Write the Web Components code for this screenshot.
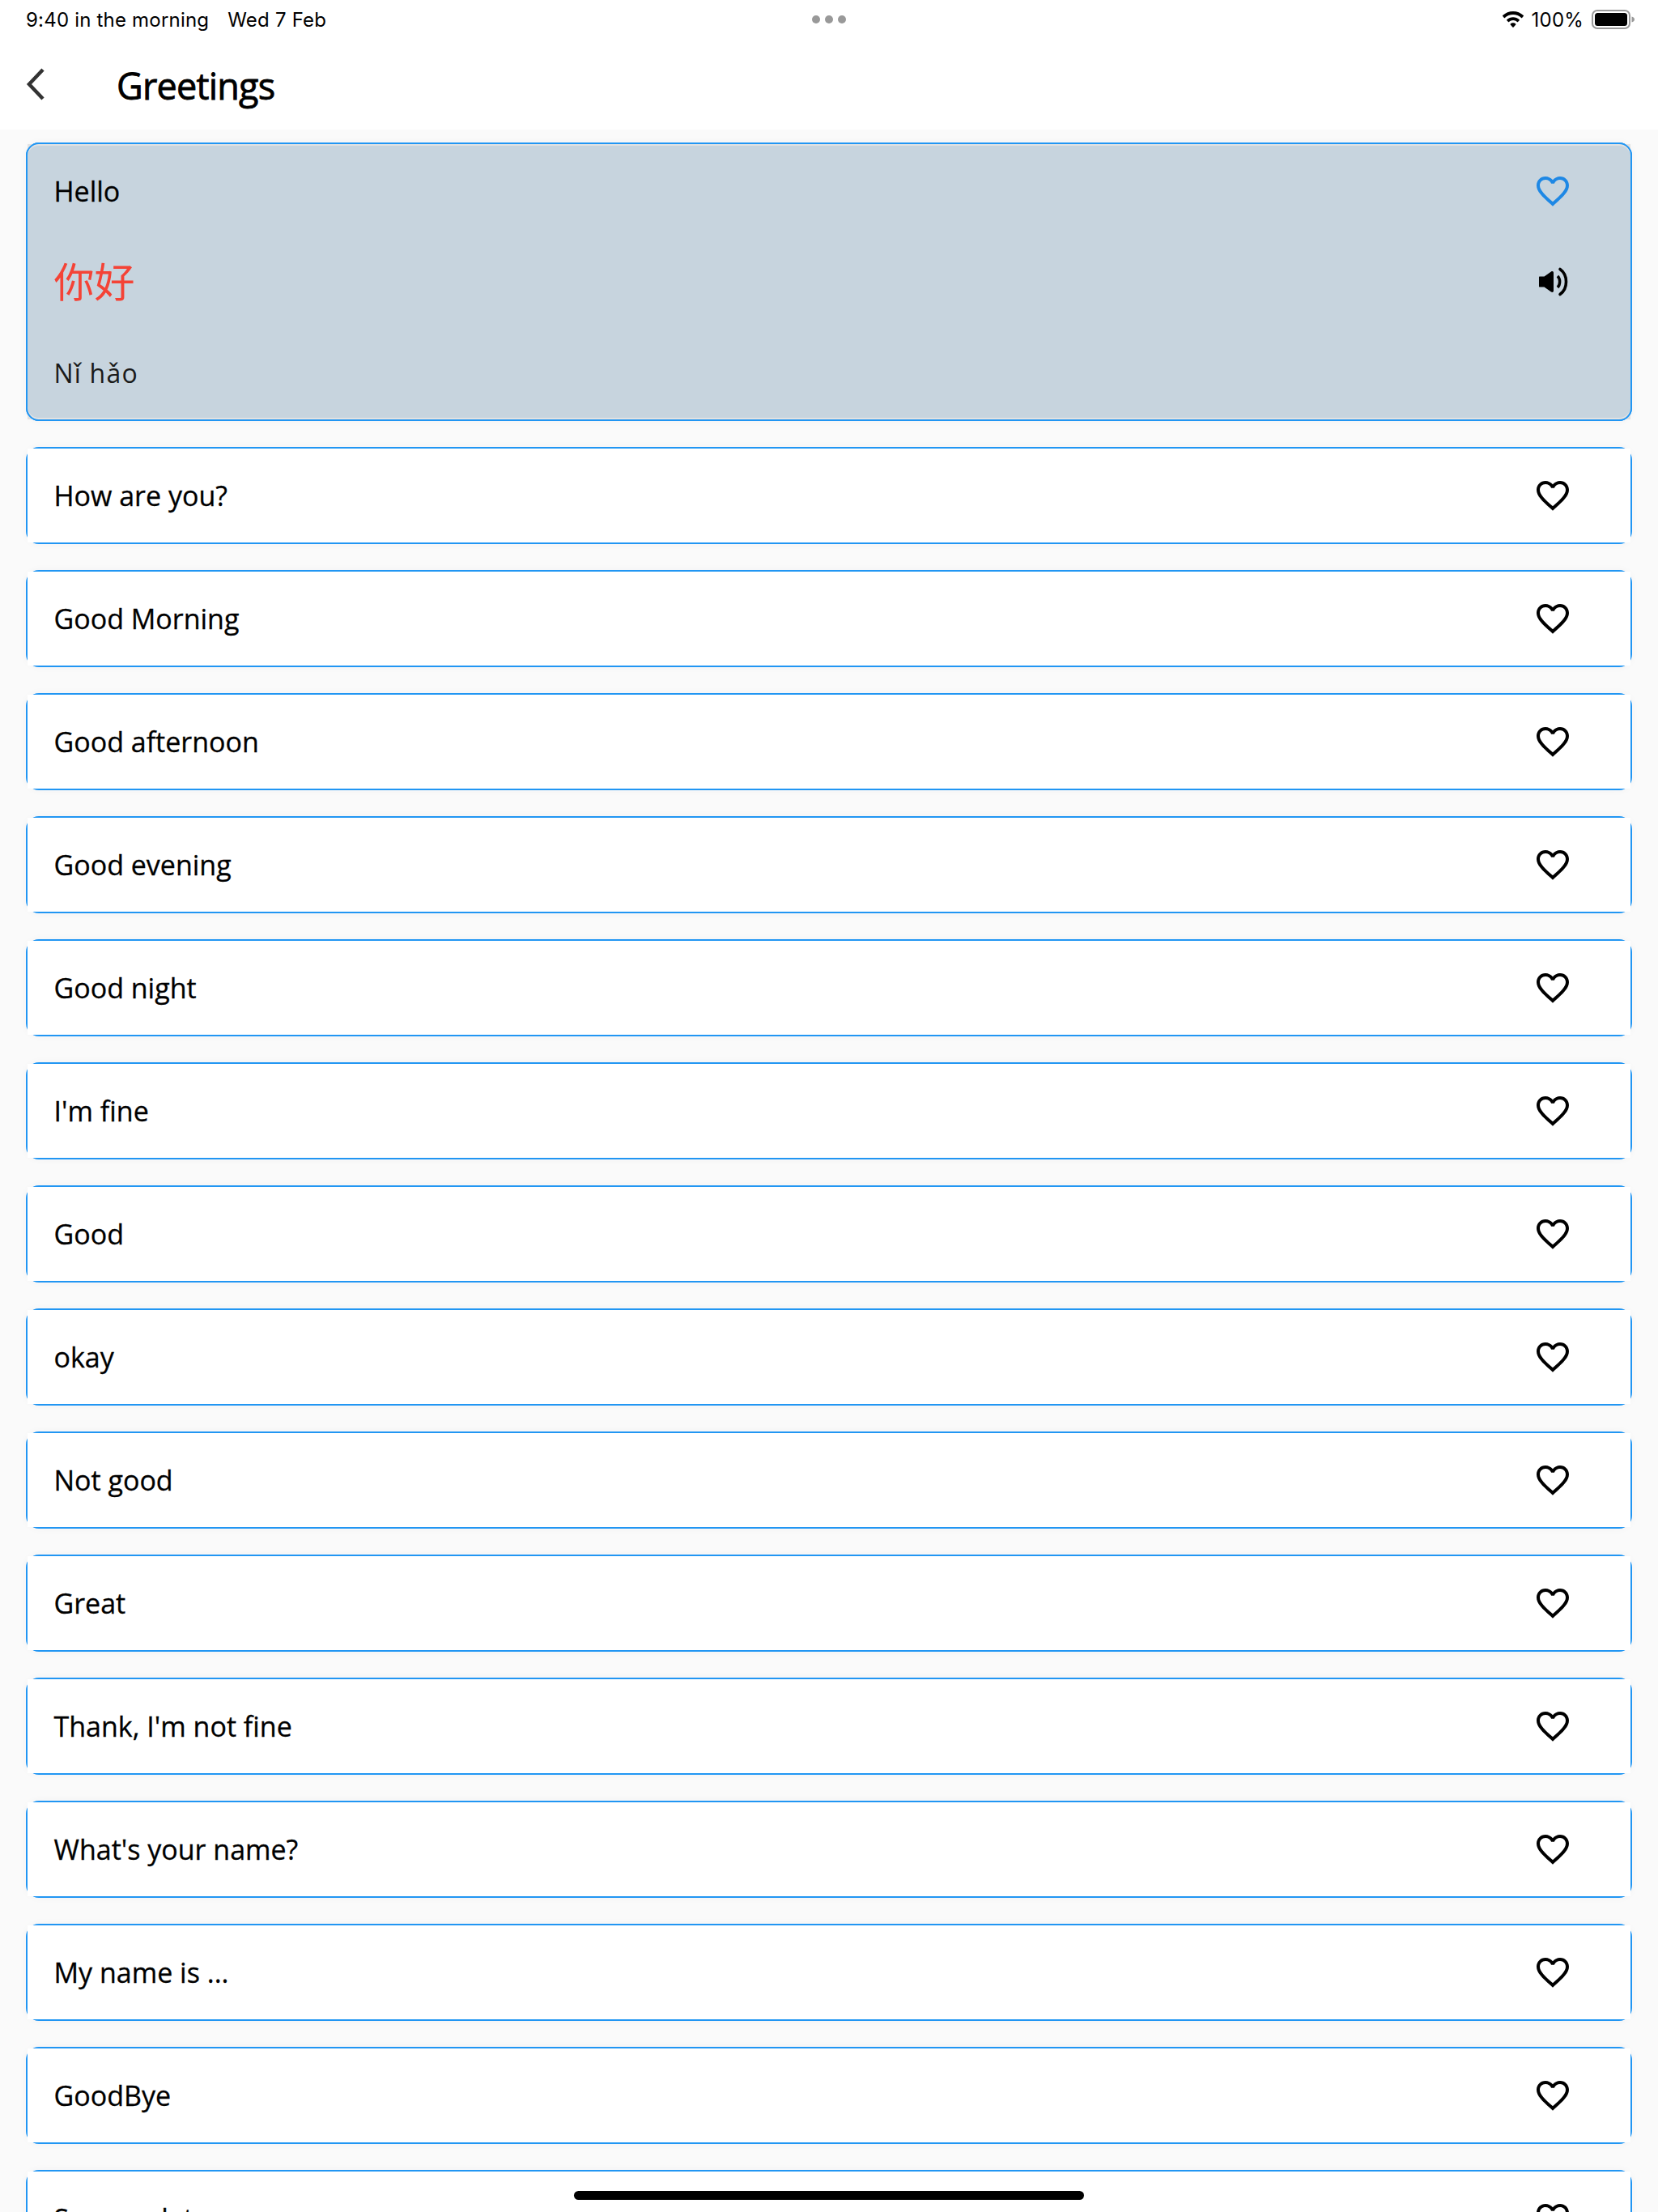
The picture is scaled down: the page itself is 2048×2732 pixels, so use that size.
<!DOCTYPE html>
<html lang="en">
<head>
<meta charset="utf-8">
<title>Greetings</title>
<style>
  html, body { margin: 0; padding: 0; }
  body { width: 2048px; height: 2732px; overflow: hidden; background: #fafafa; font-family: "Open Sans", sans-serif; }
</style>
</head>
<body>
<greet-screen>
  <status-bar></status-bar>
  <nav-bar>Greetings</nav-bar>
  <phrase-list>
    <phrase-card open>
      Hello
      <span slot="hanzi">你好</span>
      <span slot="pinyin">Nǐ hǎo</span>
    </phrase-card>
    <phrase-card>How are you?</phrase-card>
    <phrase-card>Good Morning</phrase-card>
    <phrase-card>Good afternoon</phrase-card>
    <phrase-card>Good evening</phrase-card>
    <phrase-card>Good night</phrase-card>
    <phrase-card>I'm fine</phrase-card>
    <phrase-card>Good</phrase-card>
    <phrase-card>okay</phrase-card>
    <phrase-card>Not good</phrase-card>
    <phrase-card>Great</phrase-card>
    <phrase-card>Thank, I'm not fine</phrase-card>
    <phrase-card>What's your name?</phrase-card>
    <phrase-card>My name is ...</phrase-card>
    <phrase-card>GoodBye</phrase-card>
    <phrase-card>See you later</phrase-card>
  </phrase-list>
  <home-bar></home-bar>
</greet-screen>

<script>
const HEART = `<svg viewBox="0 0 24 24" width="48" height="48" fill="currentColor"><path d="M16.5 3c-1.74 0-3.41.81-4.5 2.09C10.91 3.81 9.24 3 7.5 3 4.42 3 2 5.42 2 8.5c0 3.78 3.4 6.86 8.55 11.54L12 21.35l1.45-1.32C18.6 15.36 22 12.28 22 8.5 22 5.42 19.58 3 16.5 3zm-4.4 15.55l-.1.1-.1-.1C7.14 14.24 4 11.39 4 8.5 4 6.5 5.5 5 7.5 5c1.54 0 3.04.99 3.57 2.36h1.87C13.46 5.99 14.96 5 16.5 5c2 0 3.5 1.5 3.5 3.5 0 2.89-3.14 5.74-7.9 10.05z"/></svg>`;
const SPEAKER = `<svg viewBox="0 0 48 48" width="48" height="48"><path d="M6 17.500h5.500L20 11.500c1.600-1 3-.3 3 1.500v22c0 1.800-1.400 2.500-3 1.500l-8.500-6H6c-.8 0-1-.4-1-1V18.500c0-.6.2-1 1-1z" fill="#000"/><path d="M28 17c3.500 3.500 3.500 10.500 0 14" fill="none" stroke="#000" stroke-width="3.500"/><path d="M31 8.500c10 7 10 24 0 31" fill="none" stroke="#000" stroke-width="3.600" stroke-linecap="round"/></svg>`;

class GreetScreen extends HTMLElement {
  constructor() {
    super();
    this.attachShadow({ mode: 'open' }).innerHTML = `
      <style>
        :host { display: flex; flex-direction: column; position: relative; width: 2048px; height: 2732px; overflow: hidden; }
      </style>
      <slot></slot>`;
  }
}

class StatusBar extends HTMLElement {
  constructor() {
    super();
    this.attachShadow({ mode: 'open' }).innerHTML = `
      <style>
        :host {
          display: grid;
          flex: none;
          grid-template-columns: 1fr auto 1fr;
          align-items: center;
          height: 48px;
          padding: 0 28px;
          background: #fff;
          font-family: Inter, "Liberation Sans", sans-serif;
          font-size: 24px;
          letter-spacing: .2px;
          color: #000;
        }
        .left { display: flex; gap: 23px; padding-left: 4px; }
        .dots { display: flex; gap: 6px; }
        .dots i { width: 10px; height: 10px; border-radius: 50%; background: #999; }
        .right { display: flex; justify-content: flex-end; align-items: center; gap: 9px; }
        svg { display: block; }
      </style>
      <div class="left"><span>9:40 in the morning</span><span>Wed 7 Feb</span></div>
      <div class="dots"><i></i><i></i><i></i></div>
      <div class="right">
        <svg width="28" height="20" viewBox="0 0 28 20"><path d="M14 0c4.900 0 9.400 1.900 12.800 5.100.3.300.3.700 0 1l-1.700 1.800c-.3.300-.7.300-1 0C21.500 5.400 17.900 3.900 14 3.900S6.500 5.400 3.900 7.900c-.3.300-.7.300-1 0L1.200 6.100c-.3-.3-.3-.7 0-1C4.600 1.900 9.100 0 14 0zm0 7.200c2.900 0 5.600 1.100 7.700 3.100.3.300.3.700 0 1l-1.700 1.800c-.3.300-.7.300-1 0-1.300-1.200-3.100-2-5-2s-3.700.8-5 2c-.3.300-.7.300-1 0l-1.700-1.800c-.3-.3-.3-.7 0-1 2.100-2 4.800-3.100 7.700-3.100zm0 7.100c1.300 0 2.400.5 3.300 1.300.2.200.2.600 0 .8l-2.900 3.300c-.2.200-.6.200-.8 0l-2.900-3.300c-.2-.2-.2-.6 0-.8.900-.8 2-1.300 3.300-1.300z" fill="#000"/></svg>
        <span>100%</span>
        <svg width="54" height="24" viewBox="0 0 54 24" style="margin-left:1px"><rect x="1" y="1" width="46" height="22" rx="6" fill="none" stroke="#999" stroke-width="2"/><rect x="4" y="4" width="40" height="16" rx="3.500" fill="#000"/><path d="M49.500 8.500c2 .4 3.500 1.800 3.500 3.500s-1.500 3.100-3.500 3.500z" fill="#999"/></svg>
      </div>`;
  }
}

class NavBar extends HTMLElement {
  constructor() {
    super();
    this.attachShadow({ mode: 'open' }).innerHTML = `
      <style>
        :host {
          display: flex;
          flex: none;
          align-items: center;
          height: 112px;
          padding-left: 32px;
          background: #fff;
          font-family: "Open Sans", sans-serif;
          font-size: 45px;
          font-weight: 400;
          color: #000;
          letter-spacing: -.8px;
          -webkit-text-stroke: .8px #000;
        }
        svg { display: block; width: 24px; height: 42px; margin-right: 88px; flex: none; }
        .title { line-height: 1; position: relative; top: 1px; }
      </style>
      <svg viewBox="0 0 24 42"><path d="M21 3 4 21l17 18" fill="none" stroke="#333" stroke-width="4.500"/></svg>
      <span class="title"><slot></slot></span>`;
  }
}

class PhraseList extends HTMLElement {
  constructor() {
    super();
    this.attachShadow({ mode: 'open' }).innerHTML = `
      <style>
        :host { display: flex; flex-direction: column; gap: 32px; padding: 16px 32px; }
      </style>
      <slot></slot>`;
  }
}

class PhraseCard extends HTMLElement {
  constructor() {
    super();
    this.attachShadow({ mode: 'open' }).innerHTML = `
      <style>
        :host {
          display: block;
          flex: none;
          box-sizing: border-box;
          position: relative;
          border: 2px solid #2196f3;
          border-radius: 16px;
          box-shadow: 0 0 10px rgba(40, 40, 80, .04);
          font-family: "Open Sans", sans-serif;
          font-size: 34px;
          color: #000;
          -webkit-text-stroke: .3px #000;
        }
        .inner { background: #fff; }
        .row { display: flex; align-items: center; height: 116px; padding: 0 72px 0 32.5px; }
        .text { flex: 1; }
        svg { display: block; }
        .extra { display: none; }

        :host([open]) .inner { background: #e2e2e2; padding: 2px 0; }
        :host([open]) .fill { background: #c7d4de; border-radius: 14px; }
        :host([open]) .row { height: 112px; }
        :host([open]) .heart { color: #1e88e5; }
        :host([open]) .extra { display: flex; }
        /* the blue ring sits on top of the grey corners on the open card */
        .ring { display: none; }
        :host([open]) .ring {
          display: block;
          position: absolute;
          inset: -2px;
          border: 2px solid #2196f3;
          border-radius: 16px;
          pointer-events: none;
        }
        .hanzi { font-family: "Noto Sans CJK SC", sans-serif; font-size: 50px; color: #f44336; -webkit-text-stroke: 0; padding-bottom: 6px; }
        .speaker { margin-right: -2px; }
        .pinyin { font-size: 32px; color: #1a1a1a; letter-spacing: 1.2px; -webkit-text-stroke: 0; }
      </style>
      <div class="inner">
        <div class="fill">
          <div class="row">
            <span class="text"><slot></slot></span>
            <span class="heart">${HEART}</span>
          </div>
          <div class="row extra">
            <span class="text hanzi"><slot name="hanzi"></slot></span>
            <span class="speaker">${SPEAKER}</span>
          </div>
          <div class="row extra">
            <span class="text pinyin"><slot name="pinyin"></slot></span>
          </div>
        </div>
      </div>
      <div class="ring"></div>`;
  }
}

class HomeBar extends HTMLElement {
  constructor() {
    super();
    this.attachShadow({ mode: 'open' }).innerHTML = `
      <style>
        :host {
          display: block;
          position: absolute;
          left: 709px;
          top: 2706px;
          width: 630px;
          height: 11px;
          border-radius: 6px;
          background: #000;
        }
      </style>`;
  }
}

customElements.define('greet-screen', GreetScreen);
customElements.define('status-bar', StatusBar);
customElements.define('nav-bar', NavBar);
customElements.define('phrase-list', PhraseList);
customElements.define('phrase-card', PhraseCard);
customElements.define('home-bar', HomeBar);
</script>
</body>
</html>
